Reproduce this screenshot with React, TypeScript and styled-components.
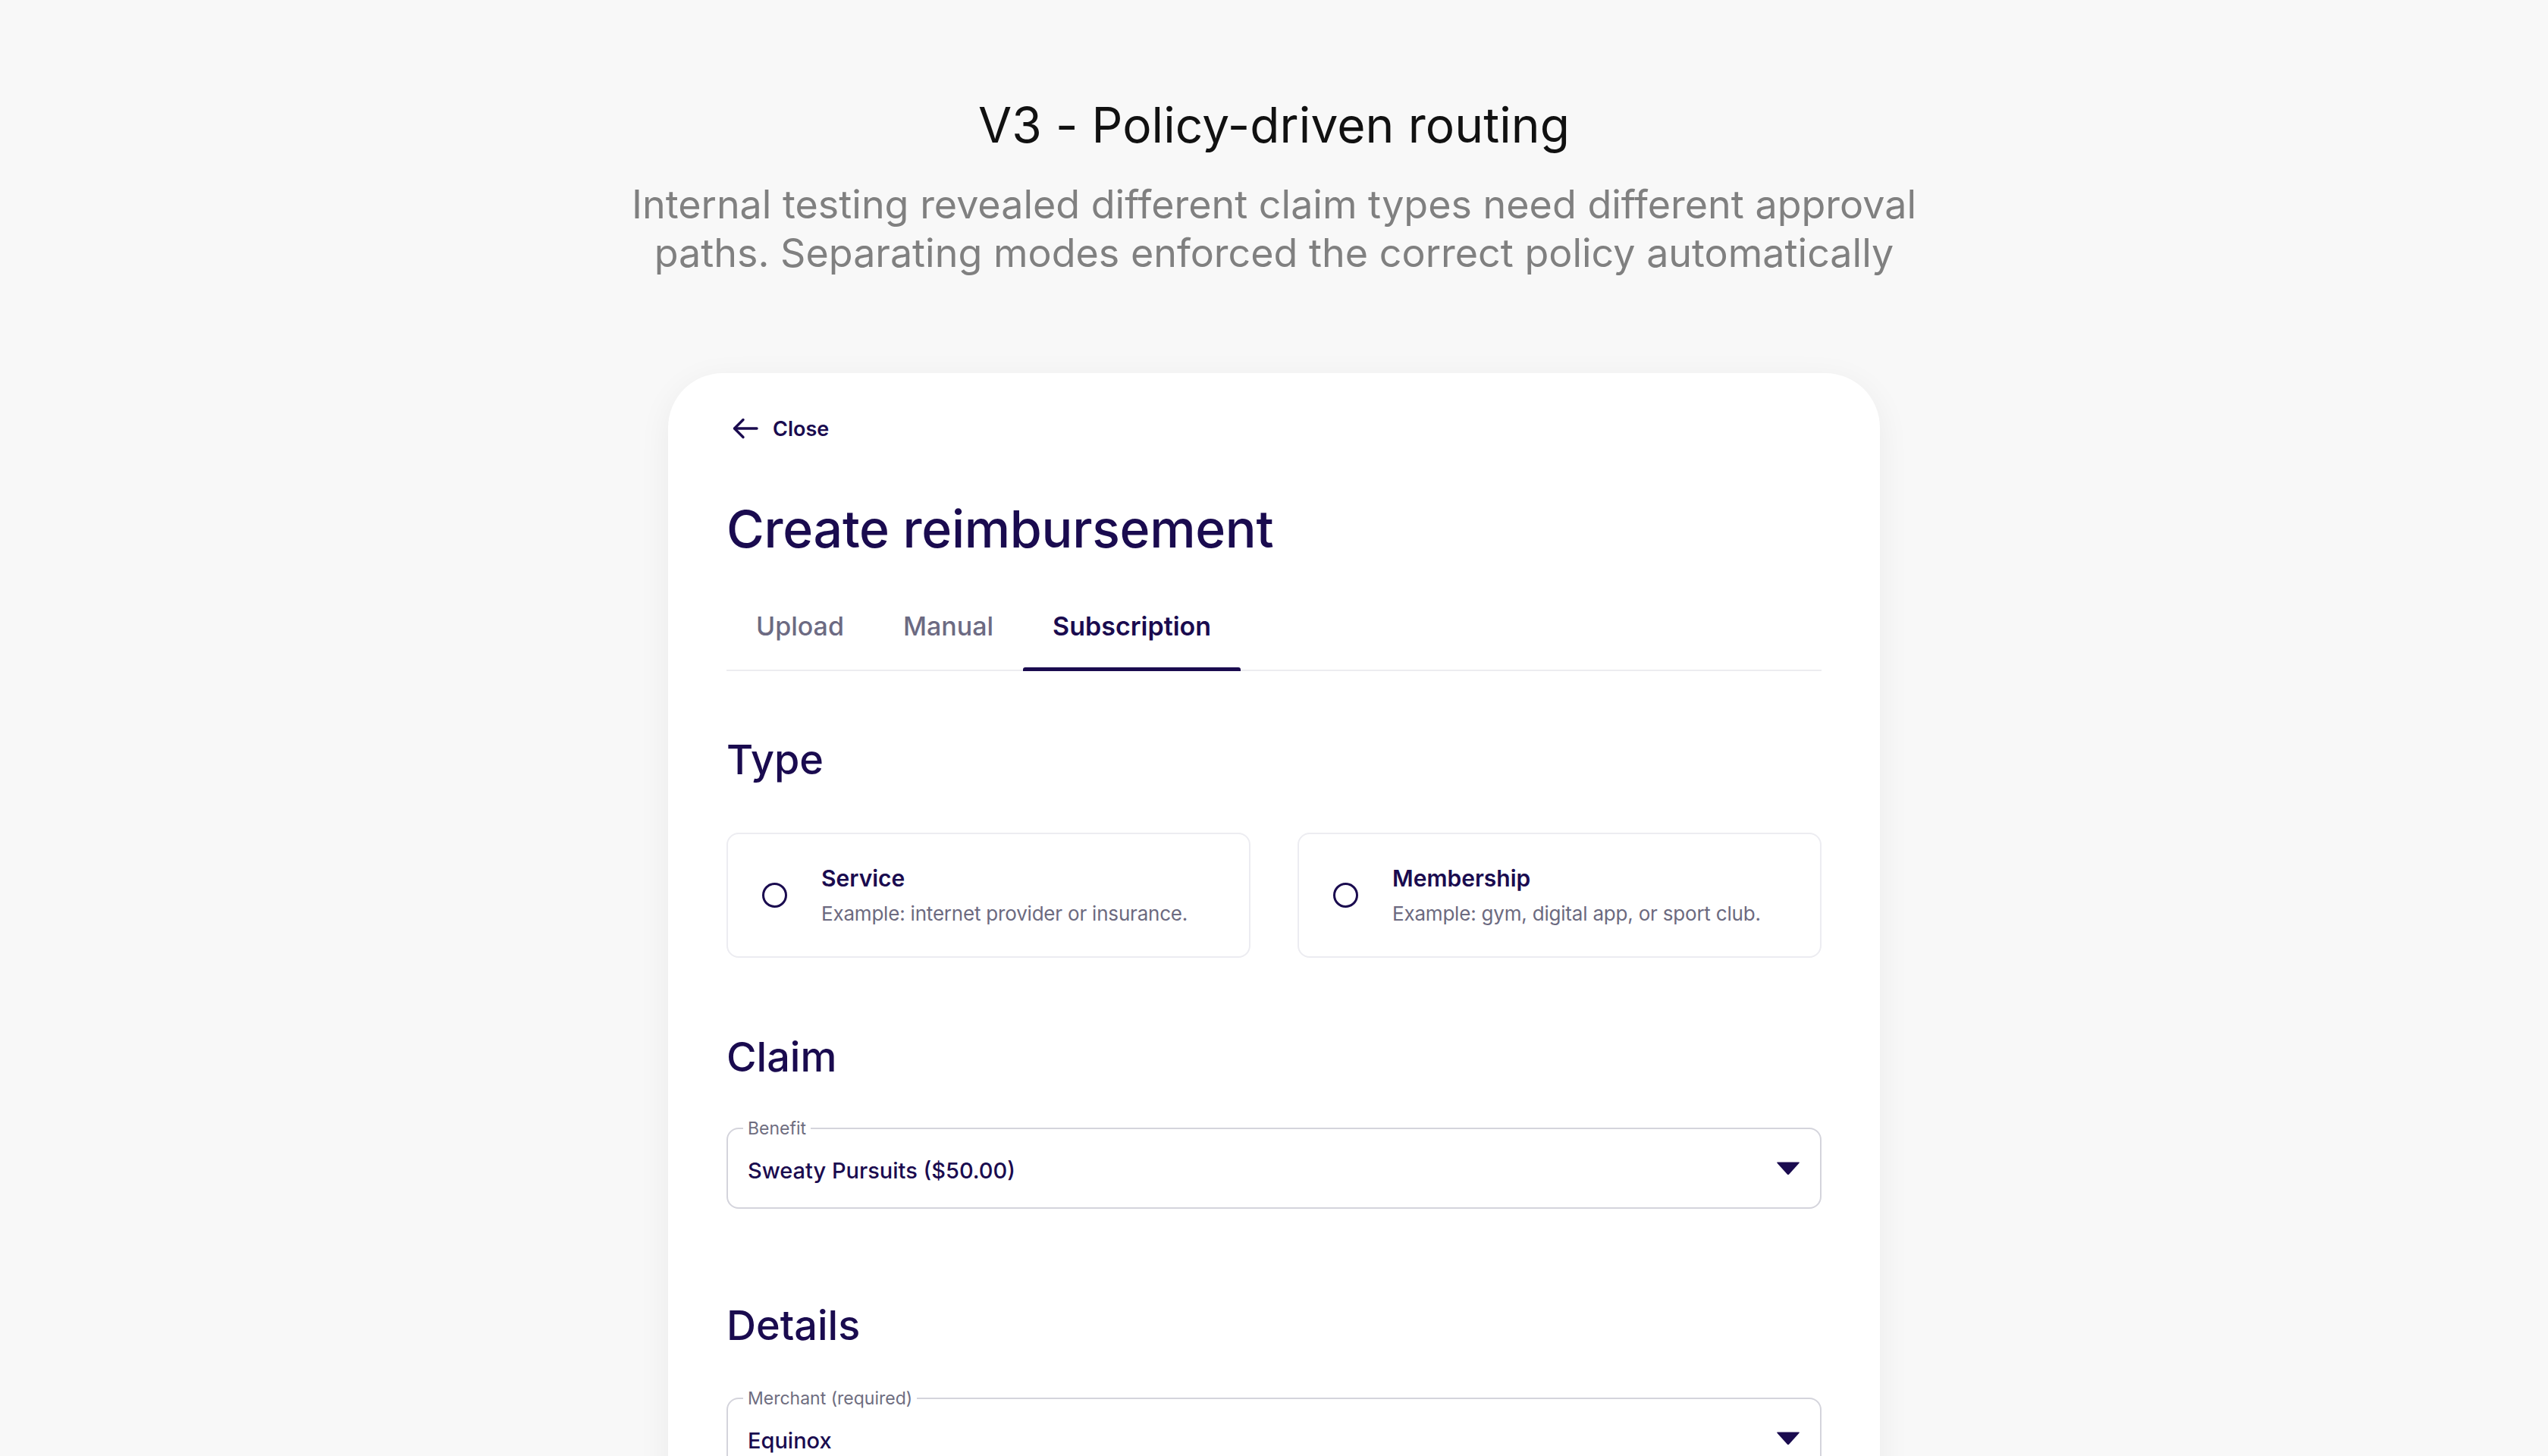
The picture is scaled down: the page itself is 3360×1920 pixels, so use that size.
import React from "react";
import styled, { createGlobalStyle } from "styled-components";

const NAVY = "#1a0b4f";

const Global = createGlobalStyle`
  html, body { margin: 0; padding: 0; }
  body {
    background: #f8f8f8;
    font-family: Inter, "Noto Sans", "Liberation Sans", sans-serif;
    height: 1920px;
    overflow: hidden;
  }
  * { box-sizing: border-box; }
`;

const Page = styled.main`
  display: flex;
  flex-direction: column;
  align-items: center;
  padding-top: 127px;
`;

const PageTitle = styled.h1`
  margin: 0;
  font-size: 64px;
  line-height: 76px;
  font-weight: 400;
  color: #111111;
  letter-spacing: 0.1px;
`;

const PageSubtitle = styled.p`
  margin: 35px 0 0;
  font-size: 52px;
  line-height: 64px;
  font-weight: 400;
  color: #808080;
  text-align: center;
  width: 1900px;
`;

const Card = styled.section`
  margin-top: 126px;
  width: 1598px;
  background: #ffffff;
  border-radius: 72px 72px 0 0;
  box-shadow: 0 10px 44px rgba(0, 0, 0, 0.06);
  padding: 53px 77px 200px;
  display: flex;
  flex-direction: column;
  color: ${NAVY};
`;

const CloseButton = styled.button`
  align-self: flex-start;
  display: flex;
  align-items: center;
  gap: 19px;
  background: none;
  border: none;
  padding: 0 0 0 8px;
  height: 40px;
  font-family: inherit;
  font-size: 27px;
  font-weight: 600;
  color: ${NAVY};
  cursor: pointer;
`;

const Title = styled.h2`
  margin: 71px 0 0;
  font-size: 68px;
  line-height: 82px;
  font-weight: 500;
  letter-spacing: -0.3px;
`;

const TabBar = styled.div`
  margin-top: 45px;
  display: flex;
  border-bottom: 2px solid #ececf0;
`;

const Tab = styled.button<{ $active?: boolean }>`
  position: relative;
  background: none;
  border: none;
  padding: 22px 39px 37px;
  font-family: inherit;
  font-size: 34px;
  line-height: 41px;
  font-weight: ${(p) => (p.$active ? 600 : 500)};
  color: ${(p) => (p.$active ? NAVY : "#6c6a82")};
  cursor: pointer;
  &::after {
    content: "";
    position: absolute;
    left: 0;
    right: 0;
    bottom: -2px;
    height: 5px;
    border-radius: 3px 3px 0 0;
    background: ${(p) => (p.$active ? NAVY : "transparent")};
  }
`;

const SectionHeading = styled.h3<{ $gap: number }>`
  margin: ${(p) => p.$gap}px 0 0;
  font-size: 54px;
  line-height: 60px;
  font-weight: 500;
`;

const OptionGrid = styled.div`
  margin-top: 66px;
  display: grid;
  grid-template-columns: 1fr 1fr;
  gap: 62px;
`;

const OptionCard = styled.label`
  display: flex;
  align-items: center;
  gap: 45px;
  height: 165px;
  padding: 0 40px 0 45px;
  border: 2px solid #ececf1;
  border-radius: 16px;
  background: #fff;
  cursor: pointer;
`;

const Radio = styled.span`
  flex: none;
  width: 33px;
  height: 33px;
  border-radius: 50%;
  border: 3px solid ${NAVY};
`;

const OptionText = styled.div`
  display: flex;
  flex-direction: column;
  gap: 12px;
`;

const OptionTitle = styled.span`
  font-size: 30px;
  line-height: 36px;
  font-weight: 600;
  color: ${NAVY};
`;

const OptionDesc = styled.span`
  font-size: 26px;
  line-height: 34px;
  color: #6c6a80;
  letter-spacing: -0.2px;
`;

const Field = styled.fieldset<{ $gap: number }>`
  margin: ${(p) => p.$gap}px 0 0;
  border: 2px solid #d4d4dc;
  border-radius: 16px;
  padding: 0 26px 0 26px;
  min-width: 0;
`;

const Legend = styled.legend`
  padding: 0 6px;
  margin-left: -6px;
  font-size: 23px;
  line-height: 26px;
  color: #6e6d80;
`;

const SelectRow = styled.div`
  display: flex;
  align-items: center;
  justify-content: space-between;
  padding: 25px 0 30px;
`;

const SelectValue = styled.span`
  font-size: 29px;
  line-height: 36px;
  font-weight: 500;
  color: ${NAVY};
`;

const BackArrow = () => (
  <svg width="34" height="28" viewBox="0 0 34 28" fill="none" stroke={NAVY} strokeWidth="3.4" strokeLinecap="round" strokeLinejoin="round">
    <path d="M32 14H3" />
    <path d="M14 2.5L2.5 14L14 25.5" />
  </svg>
);

const Caret = () => (
  <svg width="32" height="19" viewBox="0 0 32 19" style={{ marginTop: -8 }}>
    <path d="M2 1.5 H30 Q31.5 1.5 30.5 2.8 L17.2 17.4 Q16 18.6 14.8 17.4 L1.5 2.8 Q0.5 1.5 2 1.5 Z" fill={NAVY} />
  </svg>
);

const SelectField = ({ label, value, gap }: { label: string; value: string; gap: number }) => (
  <Field $gap={gap}>
    <Legend>{label}</Legend>
    <SelectRow>
      <SelectValue>{value}</SelectValue>
      <Caret />
    </SelectRow>
  </Field>
);

export default function App() {
  return (
    <>
      <Global />
      <Page>
        <PageTitle>V3 - Policy-driven routing</PageTitle>
        <PageSubtitle>
          Internal testing revealed different claim types need different approval
          <br />
          paths. Separating modes enforced the correct policy automatically
        </PageSubtitle>
        <Card>
          <CloseButton>
            <BackArrow />
            Close
          </CloseButton>
          <Title>Create reimbursement</Title>
          <TabBar>
            <Tab>Upload</Tab>
            <Tab>Manual</Tab>
            <Tab $active>Subscription</Tab>
          </TabBar>

          <SectionHeading $gap={87}>Type</SectionHeading>
          <OptionGrid>
            <OptionCard>
              <Radio />
              <OptionText>
                <OptionTitle>Service</OptionTitle>
                <OptionDesc>Example: internet provider or insurance.</OptionDesc>
              </OptionText>
            </OptionCard>
            <OptionCard>
              <Radio />
              <OptionText>
                <OptionTitle>Membership</OptionTitle>
                <OptionDesc>Example: gym, digital app, or sport club.</OptionDesc>
              </OptionText>
            </OptionCard>
          </OptionGrid>

          <SectionHeading $gap={101}>Claim</SectionHeading>
          <SelectField gap={51} label="Benefit" value="Sweaty Pursuits ($50.00)" />

          <SectionHeading $gap={124}>Details</SectionHeading>
          <SelectField gap={53} label="Merchant (required)" value="Equinox" />
        </Card>
      </Page>
    </>
  );
}
